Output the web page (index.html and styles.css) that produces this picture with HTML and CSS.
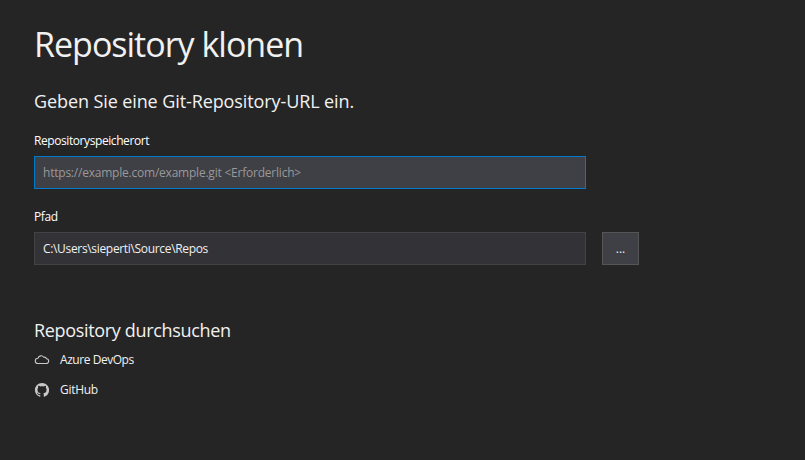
FILE: index.html
```
<!DOCTYPE html>
<html lang="de">
<head>
<meta charset="utf-8">
<title>Repository klonen</title>
<link rel="stylesheet" href="styles.css">
</head>
<body>
<main class="dialog">
  <h1 class="title">Repository klonen</h1>
  <h2 class="subtitle">Geben Sie eine Git-Repository-URL ein.</h2>
  <div class="label label-url">Repositoryspeicherort</div>
  <div class="field field-active"><span class="hint">https://example.com/example.git &lt;Erforderlich&gt;</span></div>
  <div class="label label-path">Pfad</div>
  <div class="row">
    <div class="field"><span class="path">C:\Users\sieperti\Source\Repos</span></div>
    <div class="browse">...</div>
  </div>
  <h2 class="subtitle providers-title">Repository durchsuchen</h2>
  <div class="provider">
    <svg class="icon" viewBox="0 0 16 16"><path d="M3.900 12.400h8.100a2.400 2.400 0 0 0 .5-4.800 2.400 2.400 0 0 0-2.700-1.500A3.300 3.300 0 0 0 3.900 7.200 2.600 2.600 0 0 0 3.900 12.400Z" fill="none" stroke="#c8c8c8" stroke-width="1.100" transform="translate(0 -.9)"/></svg>
    <span class="azure">Azure DevOps</span>
  </div>
  <div class="provider">
    <svg class="icon" viewBox="-1 -1 18 18"><path fill="#c8c8c8" d="M8 0C3.58 0 0 3.58 0 8c0 3.54 2.29 6.53 5.47 7.59.4.07.55-.17.55-.38 0-.19-.01-.82-.01-1.490-2.010.370-2.530-.490-2.690-.940-.090-.230-.480-.940-.820-1.130-.280-.150-.680-.520-.010-.530.630-.010 1.080.580 1.230.820.720 1.210 1.870.870 2.330.660.070-.520.280-.870.510-1.070-1.780-.200-3.640-.890-3.640-3.950 0-.870.310-1.590.820-2.150-.080-.200-.360-1.020.080-2.120 0 0 .670-.210 2.200.820.640-.180 1.320-.270 2-.270s1.360.090 2 .270c1.530-1.040 2.200-.820 2.200-.820.440 1.100.160 1.920.080 2.120.510.560.820 1.270.820 2.150 0 3.070-1.870 3.750-3.650 3.950.290.250.540.730.540 1.480 0 1.070-.010 1.930-.010 2.200 0 .210.150.460.550.380A8.010 8.010 0 0 0 16 8c0-4.420-3.580-8-8-8Z"/></svg>
    <span class="github">GitHub</span>
  </div>
</main>
</body>
</html>
```
FILE: styles.css
```
* { box-sizing: border-box; }
body {
  margin: 0;
  background: #252526;
  color: #f1f1f1;
  font: 12px/16px "Open Sans", "Noto Sans", sans-serif;
  white-space: nowrap;
}
.dialog { height: 460px; padding: 21px 34px 0; }
.title { margin: 0; font-size: 34px; font-weight: 400; line-height: 46px; letter-spacing: -1px; }
.subtitle { margin: 22px 0 0; font-size: 18px; font-weight: 400; line-height: 24px; letter-spacing: -0.1px; }
.label { color: #fff; letter-spacing: -0.42px; }
.label-url { margin-top: 20px; }
.label-path { margin-top: 20px; }
.field {
  width: 552px;
  height: 33px;
  padding: 0 8px;
  border: 1px solid #434346;
  background: #333337;
  line-height: 32px;
  letter-spacing: -0.33px;
}
.field-active { margin-top: 7px; border-color: #007acc; background: #3f3f46; color: #999; letter-spacing: -0.22px; }
.row { display: flex; gap: 16px; margin-top: 7px; }
.browse {
  width: 37px;
  height: 33px;
  border: 1px solid #555;
  background: #3f3f46;
  text-align: center;
  line-height: 31px;
}
.providers-title { margin-top: 53px; letter-spacing: -0.33px; }
.provider { display: flex; align-items: center; gap: 10px; height: 16px; margin-top: 14px; letter-spacing: -0.3px; }
.azure { letter-spacing: -0.45px; }
.providers-title + .provider { margin-top: 10px; }
.icon { width: 16px; height: 16px; }
```
